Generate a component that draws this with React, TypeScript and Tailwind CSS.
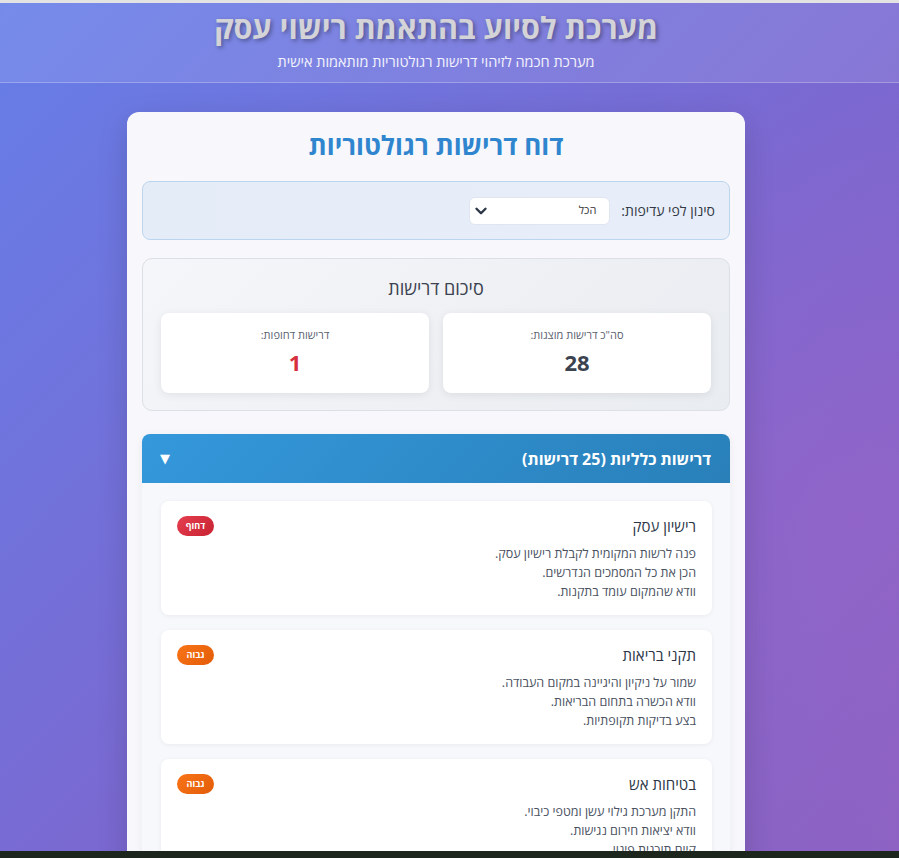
import React from "react";

const items = [
  {
    title: "רישיון עסק",
    badge: "דחוף",
    urgent: true,
    lines: ["פנה לרשות המקומית לקבלת רישיון עסק.", "הכן את כל המסמכים הנדרשים.", "וודא שהמקום עומד בתקנות."],
  },
  {
    title: "תקני בריאות",
    badge: "גבוה",
    urgent: false,
    lines: ["שמור על ניקיון והיגיינה במקום העבודה.", "וודא הכשרה בתחום הבריאות.", "בצע בדיקות תקופתיות."],
  },
  {
    title: "בטיחות אש",
    badge: "גבוה",
    urgent: false,
    lines: ["התקן מערכת גילוי עשן ומטפי כיבוי.", "וודא יציאות חירום נגישות.", "קיים תוכנית פינוי."],
  },
];

export default function App() {
  return (
    <div
      dir="rtl"
      className="relative h-[858px] overflow-hidden bg-[radial-gradient(circle_at_95%_60%,rgba(170,100,200,0.35),transparent_45%),linear-gradient(135deg,#667ee8_0%,#7a68d0_55%,#8a62c2_100%)]"
      style={{ fontFamily: '"Open Sans", "Noto Sans", "DejaVu Sans", sans-serif' }}
    >
      <div className="h-[3px] bg-[#e3e3e3]" />
      <header className="h-[80px] border-b border-white/25 bg-white/10 pr-[27px] text-center">
        <h1 className="pt-[3px] text-[30.5px] font-bold leading-[42px] text-[#d3d3d8] [text-shadow:2px_2px_4px_rgba(0,0,0,0.35)]">
          מערכת לסיוע בהתאמת רישוי עסק
        </h1>
        <p className="mt-[4px] text-[14.5px] leading-[20px] text-white/90">מערכת חכמה לזיהוי דרישות רגולטוריות מותאמות אישית</p>
      </header>

      <main className="flex justify-center pr-[27px] pt-[29px]">
        <div className="w-[618px] rounded-[12px] bg-[#f8f8fc] px-[15px] pt-[14px] pb-[40px] shadow-[0_10px_30px_rgba(0,0,0,0.15)]">
          <h2 className="text-center text-[26px] font-bold leading-[38px] text-[#3086ce]">דוח דרישות רגולטוריות</h2>

          <div className="mt-[17px] flex h-[59px] items-center gap-[11px] rounded-[8px] border border-[#bcd5ee] bg-[linear-gradient(90deg,#e4ecf8,#e8eef9)] px-[14px]">
            <span className="text-[14px] text-[#333a45]">סינון לפי עדיפות:</span>
            <div className="flex h-[28px] w-[141px] items-center justify-between rounded-[6px] border border-[#e0e6ef] bg-white pr-[13px] pl-[2px]">
              <span className="text-[11px] text-[#333]">הכל</span>
              <svg width="18" height="18" viewBox="0 0 24 24" fill="none" stroke="#2d3748" strokeWidth="3.2" strokeLinecap="round" strokeLinejoin="round">
                <path d="M6 9l6 6 6-6" />
              </svg>
            </div>
          </div>

          <div className="mt-[18px] rounded-[10px] border border-[#dcdfe5] bg-[linear-gradient(135deg,#f5f6f9,#e9ecf0)] px-[18px] pt-[16px] pb-[17px]">
            <h3 className="text-center text-[18px] leading-[26px] text-[#3b4250]">סיכום דרישות</h3>
            <div className="mt-[12px] grid grid-cols-2 gap-[14px]">
              <div className="flex h-[80px] flex-col items-center rounded-[8px] bg-white pt-[14px] shadow-[0_2px_8px_rgba(0,0,0,0.08)]">
                <span className="text-[11px] leading-[16px] text-[#5b6270]">סה"כ דרישות מוצגות:</span>
                <span className="mt-[4px] text-[22px] font-bold leading-[30px] text-[#3b4250]">28</span>
              </div>
              <div className="flex h-[80px] flex-col items-center rounded-[8px] bg-white pt-[14px] shadow-[0_2px_8px_rgba(0,0,0,0.08)]">
                <span className="text-[11px] leading-[16px] text-[#5b6270]">דרישות דחופות:</span>
                <span className="mt-[4px] text-[22px] font-bold leading-[30px] text-[#d6303e]">1</span>
              </div>
            </div>
          </div>

          <section className="mt-[23px] overflow-hidden rounded-[8px] bg-[#f7f8fb] shadow-[0_2px_10px_rgba(0,0,0,0.06)]">
            <div className="flex h-[49px] items-center justify-between bg-[linear-gradient(135deg,#3498db,#2980b9)] pr-[19px] pl-[18px]">
              <span className="text-[16px] font-bold text-white">דרישות כלליות (25 דרישות)</span>
              <span className="text-[13px] leading-none text-white">▼</span>
            </div>
            <div className="flex flex-col gap-[15px] pr-[18px] pl-[19px] pt-[18px] pb-[18px]">
              {items.map((it) => (
                <div key={it.title} className="rounded-[8px] bg-white px-[16px] pt-[13px] pb-[14px] shadow-[0_1px_5px_rgba(0,0,0,0.06)]">
                  <div className="flex items-start justify-between">
                    <span className="mt-[1px] text-[15px] leading-[22px] text-[#2d3748]">{it.title}</span>
                    <span
                      className={
                        it.urgent
                          ? "mt-[2px] flex h-[20px] w-[37px] items-center justify-center rounded-full bg-[linear-gradient(135deg,#e53e4e,#c82333)] text-[9px] font-bold text-white"
                          : "mt-[2px] flex h-[20px] w-[37px] items-center justify-center rounded-full bg-[linear-gradient(135deg,#f97316,#e35d0a)] text-[9px] font-bold text-white"
                      }
                    >
                      {it.badge}
                    </span>
                  </div>
                  <div className="mt-[7px] flex flex-col">
                    {it.lines.map((l) => (
                      <span key={l} className="text-[12.5px] leading-[19px] text-[#4a5262]">
                        {l}
                      </span>
                    ))}
                  </div>
                </div>
              ))}
            </div>
          </section>
        </div>
      </main>

      <div className="absolute bottom-0 left-0 right-0 h-[7px] bg-[#1c261c]" />
    </div>
  );
}
